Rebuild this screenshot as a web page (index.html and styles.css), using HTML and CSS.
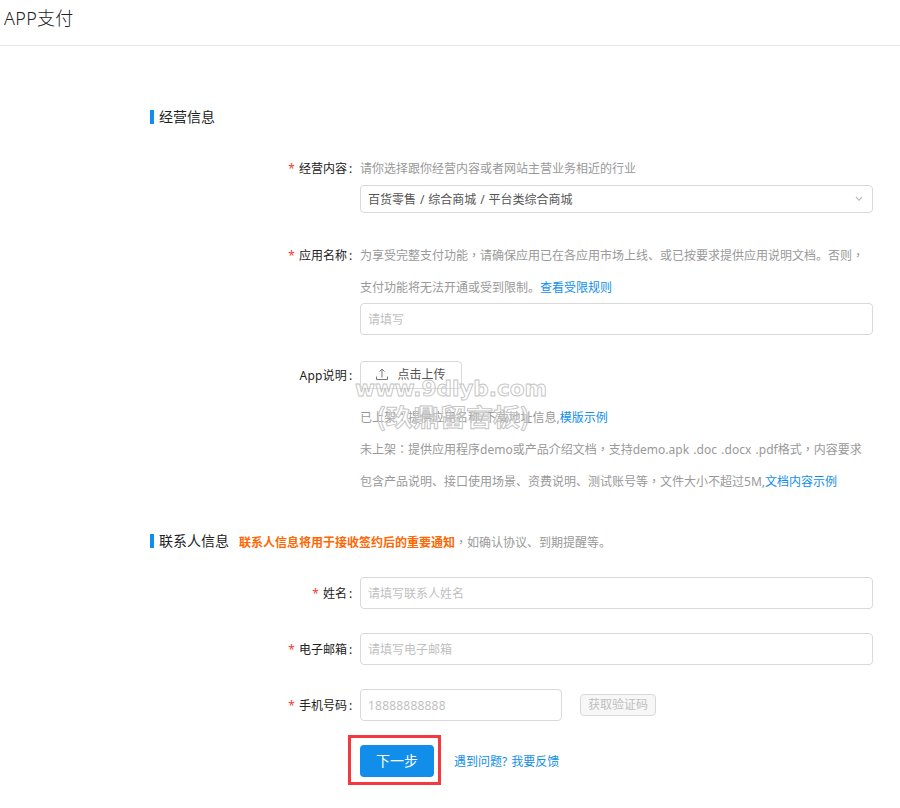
FILE: index.html
```html
<!DOCTYPE html>
<html lang="zh-CN">
<head>
<meta charset="utf-8">
<title>APP支付</title>
<link rel="stylesheet" href="styles.css">
</head>
<body>
<header class="page-header"><h1>APP支付</h1></header>
<main class="form">
  <div class="section"><h2>经营信息</h2></div>

  <div class="row row-category">
    <div class="label"><i>*</i><span>经营内容</span><b>:</b></div>
    <div class="field">
      <p class="hint">请你选择跟你经营内容或者网站主营业务相近的行业</p>
      <div class="select"><span>百货零售 / 综合商城 / 平台类综合商城</span>
        <svg width="8" height="6" viewBox="0 0 8 6"><path d="M1 1l3 3.2L7 1" fill="none" stroke="#b4bcc6" stroke-width="1.1"/></svg>
      </div>
    </div>
  </div>

  <div class="row row-name">
    <div class="label"><i>*</i><span>应用名称</span><b>:</b></div>
    <div class="field">
      <p class="hint">为享受完整支付功能<span class="mid" lang="zh-TW">，</span>请确保应用已在各应用市场上线、或已按要求提供应用说明文档。否则<span class="mid" lang="zh-TW">，</span><br>支付功能将无法开通或受到限制。<a>查看受限规则</a></p>
      <input class="input" type="text" placeholder="请填写">
    </div>
  </div>

  <div class="row row-upload">
    <div class="label"><span>App说明</span><b>:</b></div>
    <div class="field">
      <button class="upload">
        <svg width="12" height="13" viewBox="0 0 12 13"><path d="M.5 8.500v3h11v-3M6 9.500V1M3.500 3.500L6 1l2.500 2.500" fill="none" stroke="#777" stroke-width="1"/></svg>
        <span>点击上传</span>
      </button>
      <p class="hint">已上架<span class="mid" lang="zh-TW">：</span>提供应用名称/下载地址信息,<a>模版示例</a><br><span class="wide">未上架<span class="mid" lang="zh-TW">：</span>提供应用程序demo或产品介绍文档<span class="mid" lang="zh-TW">，</span>支持demo.apk .doc .docx .pdf格式<span class="mid" lang="zh-TW">，</span>内容要求</span><br>包含产品说明、接口使用场景、资费说明、测试账号等<span class="mid" lang="zh-TW">，</span>文件大小不超过5M,<a>文档内容示例</a></p>
      <svg class="watermark" width="200" height="58" viewBox="0 0 200 58">
        <text class="wm-url" x="5" y="20" textLength="192" lengthAdjust="spacingAndGlyphs">www.9dlyb.com</text>
        <text class="wm-name" x="26" y="50" textLength="154" lengthAdjust="spacingAndGlyphs">(玖鼎留言板)</text>
      </svg>
    </div>
  </div>

  <div class="section section-contact"><h2>联系人信息</h2><p><strong>联系人信息将用于接收签约后的重要通知</strong><span class="mid" lang="zh-TW">，</span>如确认协议、到期提醒等。</p></div>

  <div class="row">
    <div class="label"><i>*</i><span>姓名</span><b>:</b></div>
    <div class="field"><input class="input" type="text" placeholder="请填写联系人姓名"></div>
  </div>
  <div class="row">
    <div class="label"><i>*</i><span>电子邮箱</span><b>:</b></div>
    <div class="field"><input class="input" type="text" placeholder="请填写电子邮箱"></div>
  </div>
  <div class="row">
    <div class="label"><i>*</i><span>手机号码</span><b>:</b></div>
    <div class="field inline"><input class="input phone" type="text" placeholder="18888888888"><button class="code">获取验证码</button></div>
  </div>

  <div class="actions"><div class="highlight"><button class="next">下一步</button></div><a>遇到问题? 我要反馈</a></div>
</main>
</body>
</html>
```
FILE: styles.css
```css
* { box-sizing: border-box; }
body {
  margin: 0;
  background: #fff;
  color: #222;
  font: 12px/32px "Noto Sans", "Noto Sans CJK SC", sans-serif;
}
h1, h2, p { margin: 0; font-weight: 400; }
button, input { font: inherit; margin: 0; }
a { color: #108ee9; }
.mid { font-family: "Noto Sans CJK TC", sans-serif; line-height: 1; }

.page-header { height: 46px; padding-left: 4px; border-bottom: 1px solid #e6e6e6; }
.page-header h1 { font-size: 18px; font-weight: 300; line-height: 36px; letter-spacing: 0.3px; }

.form { padding: 55px 27px 0 150px; }

.section { display: flex; align-items: center; height: 32px; }
.section h2 { display: flex; align-items: center; font-size: 14px; }
.section h2::before { content: ""; width: 4px; height: 14px; margin-right: 5px; background: #108ee9; }
.section p { margin-left: 10px; padding-top: 3px; color: #999; }
.section strong { color: #ff6600; font-weight: 700; }
.section-contact { margin: 27px 0 20px; }

.row { display: grid; grid-template-columns: 202px 513px; column-gap: 8px; margin-bottom: 24px; }
.row-category { margin: 20px 0 26px; }
.row-name { margin-bottom: 26px; }
.row-upload { margin-bottom: 0; }
.label { display: flex; justify-content: flex-end; height: 32px; padding-top: 1px; white-space: nowrap; }
.row-category .label, .row-name .label { padding-top: 0; }
.label i { margin-right: 4px; color: #f04134; font-style: normal; }
.label b { width: 3px; margin-left: 2px; font-weight: 400; }
.field { position: relative; }
.field.inline { display: flex; align-items: center; }
.hint { color: #999; white-space: nowrap; }
.wide { word-spacing: 1.2px; }

.select, .input {
  width: 100%;
  border: 1px solid #d9d9d9;
  border-radius: 4px;
  background: #fff;
}
.select {
  display: flex;
  align-items: center;
  justify-content: space-between;
  height: 28px;
  padding: 0 9px 0 7px;
  color: #555;
  word-spacing: 0.8px;
}
.select span { padding-top: 2px; }
.row-name { margin-top: 27px; }
.row-category { margin-bottom: 0; }
.row-name .input { margin-top: -1px; }
.input { display: block; height: 32px; padding: 2px 7px 0; outline: 0; }
.input::placeholder { color: #bfbfbf; opacity: 1; }
.phone { width: 202px; letter-spacing: 0.2px; }

.upload {
  display: flex;
  align-items: center;
  justify-content: center;
  gap: 9px;
  width: 102px;
  height: 28px;
  padding: 0;
  margin-bottom: 13px;
  border: 1px solid #d9d9d9;
  border-radius: 4px;
  background: #fff;
  color: #555;
}
.upload svg { margin-top: -2px; }
.row-upload .label { height: 28px; padding: 0; line-height: 29px; letter-spacing: 0.2px; }

.watermark { position: absolute; left: -10px; top: 15px; overflow: visible; pointer-events: none; }
.watermark text { fill: #fff; fill-opacity: 0.2; stroke: #c4c4c4; stroke-width: 0.9; }
.wm-url { font: 700 21px "DejaVu Sans", sans-serif; }
.wm-name { font: 700 24px "Noto Sans CJK SC", sans-serif; }

.code {
  width: 76px;
  height: 22px;
  margin-left: 18px;
  padding: 0;
  border: 1px solid #d9d9d9;
  border-radius: 4px;
  background: #f7f7f7;
  color: #bfbfbf;
  line-height: 20px;
}

.actions { display: flex; align-items: center; margin: -10px 0 0 198px; }
.actions a { margin-left: 13px; padding-top: 3px; word-spacing: 1px; }
.highlight { width: 93px; height: 50px; padding: 7px 9px; border: 3px solid #f5383d; }
.next {
  display: block;
  width: 74px;
  height: 32px;
  padding: 0;
  border: 0;
  border-radius: 4px;
  background: #108ee9;
  color: #fff;
  font-size: 14px;
}
```
